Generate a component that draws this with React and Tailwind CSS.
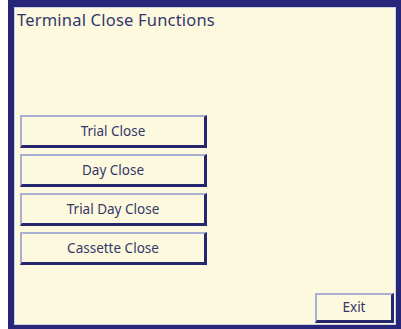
import React from 'react';

const FONT = { fontFamily: '"Comic Sans MS", "Noto Sans", "DejaVu Sans", sans-serif' };

function CloseButton({ label, className = '' }) {
  return (
    <button
      className={`flex items-center justify-center bg-[#fcf9de] text-[#34376a] text-[13.5px] border-t-2 border-l-2 border-b-[3px] border-r-[3px] border-t-[#a9b0d4] border-l-[#a9b0d4] border-b-[#26266e] border-r-[#26266e] ${className}`}
    >
      {label}
    </button>
  );
}

export default function App() {
  const items = ['Trial Close', 'Day Close', 'Trial Day Close', 'Cassette Close'];

  return (
    <div className="w-[401px] h-[329px] bg-white pl-[8px]" style={FONT}>
      <div className="h-full bg-[#26267a] pl-[6px] pt-[7px] pr-[5px] pb-[4px]">
        <div className="h-full flex flex-col bg-[#fcf9df] border border-[#cfcfe6] pl-[5px] pr-[1px] pb-[1px]">
          <div className="text-[16.5px] leading-[20px] text-[#34376a] mt-[2px] ml-[-3px] tracking-[0.2px]">Terminal Close Functions</div>
          <div className="flex flex-col gap-[6px] mt-[85px] w-[187px]">
            {items.map(label => (
              <CloseButton key={label} label={label} className="h-[33px]" />
            ))}
          </div>
          <div className="flex-1" />
          <div className="flex justify-end">
            <CloseButton label="Exit" className="w-[79px] h-[30px]" />
          </div>
        </div>
      </div>
    </div>
  );
}
